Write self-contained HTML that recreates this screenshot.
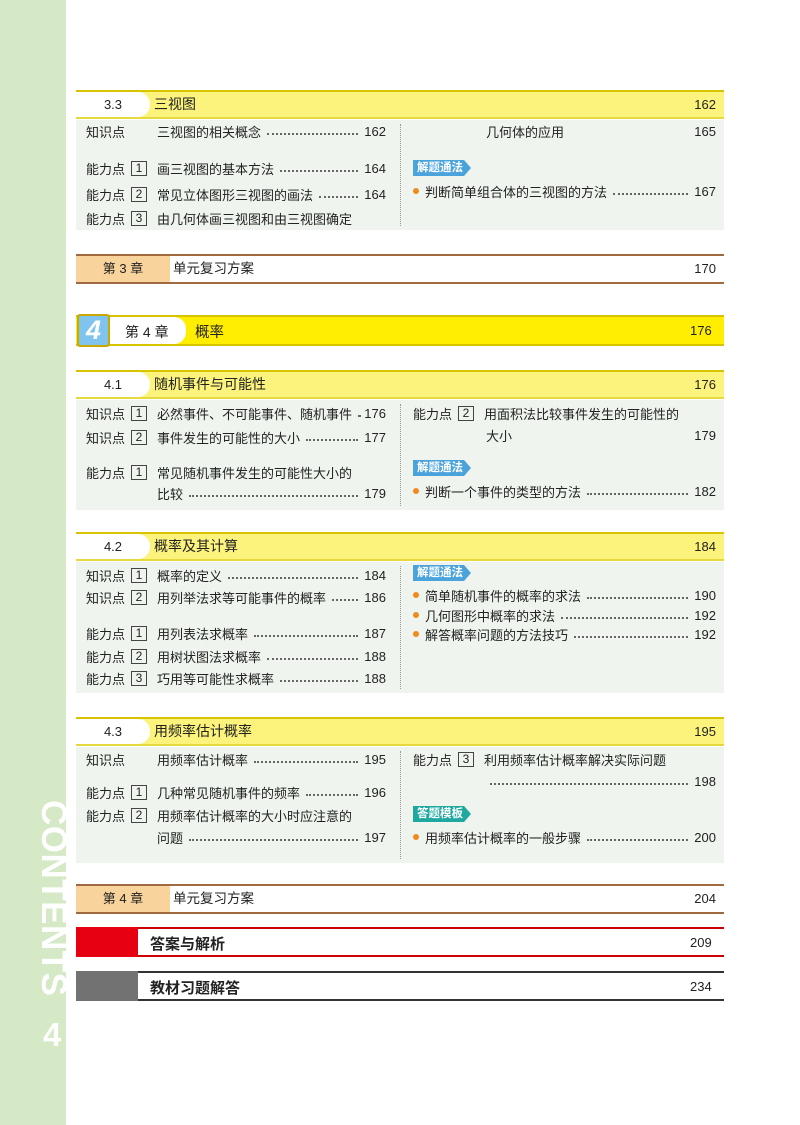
<!DOCTYPE html>
<html><head><meta charset="utf-8"><style>
*{margin:0;padding:0;box-sizing:border-box}
body{width:800px;height:1125px;background:#fff;position:relative;overflow:hidden;font-family:"Liberation Sans","Noto Sans CJK SC",sans-serif;font-size:13px;color:#222}
.a{position:absolute}
.strip{left:0;top:0;width:66px;height:1125px;background:#d6e9c6}
.four{left:43px;top:1016px;color:#fff;font-size:33px;font-weight:bold}
.sh{left:76px;width:648px;height:29px;border-top:2px solid #d8c300;border-bottom:2px solid #e8d840;background:#fbf37c}
.sh .n{position:absolute;left:0;top:0;width:74px;height:25px;background:#fff;text-align:center;line-height:25px;font-size:13px;border-radius:0 12px 12px 0}
.sh .t{position:absolute;left:78px;line-height:25px;font-size:14px}
.sh .p{position:absolute;right:8px;line-height:25px;font-size:13px}
.body{left:76px;width:648px;background:#eff5ee}
.div{left:400px;width:0;border-left:1.5px dotted #999}
.r{height:18px;display:flex;align-items:center;white-space:nowrap}
.lab{width:45px}
.bx{display:inline-block;width:16px;height:15px;border:1px solid #444;text-align:center;line-height:13px;font-size:12px;margin-right:10px}
.nb{display:inline-block;width:26px}
.ld{flex:1;border-bottom:2px dotted #666;height:1px;margin:6px 6px 0}
.bul{display:inline-block;width:6px;height:6px;border-radius:3px;background:#f08a1c;margin-right:6px}
.tag{height:16px;color:#fff;font-size:11.5px;font-weight:bold;line-height:16px;padding:0 8px 0 4px;clip-path:polygon(0 0,88% 0,100% 50%,88% 100%,0 100%)}
.cr{left:76px;width:648px;height:30px;border-top:2px solid #a06a40;border-bottom:2px solid #a06a40;background:#fff}
.cr .l{position:absolute;left:0;top:0;width:94px;height:26px;background:#f8d49c;text-align:center;line-height:26px}
.cr .t{position:absolute;left:97px;line-height:26px;font-size:13.5px}
.cr .p{position:absolute;right:8px;line-height:26px}
</style></head><body>
<div class="a strip"></div>
<div class="a" style="left:0;top:800px;width:66px;height:210px;"><div style="transform:rotate(90deg);transform-origin:0 0;position:absolute;left:68px;top:0;color:#fff;font-size:35px;font-weight:bold;white-space:nowrap;line-height:30px;letter-spacing:0.5px">CONTENTS</div></div>
<div class="a four">4</div>

<!-- 3.3 -->
<div class="a sh" style="top:90px"><div class="n">3.3</div><div class="t">三视图</div><div class="p">162</div></div>
<div class="a body" style="top:120px;height:110px"></div>
<div class="a div" style="top:124px;height:102px"></div>
<div class="a r" style="left:86px;width:300px;top:122px"><span class="lab">知识点</span><span class="nb"></span>三视图的相关概念<span class="ld"></span>162</div>
<div class="a r" style="left:86px;width:300px;top:159px"><span class="lab">能力点</span><span class="bx">1</span>画三视图的基本方法<span class="ld"></span>164</div>
<div class="a r" style="left:86px;width:300px;top:185px"><span class="lab">能力点</span><span class="bx">2</span>常见立体图形三视图的画法<span class="ld"></span>164</div>
<div class="a r" style="left:86px;width:300px;top:209px"><span class="lab">能力点</span><span class="bx">3</span>由几何体画三视图和由三视图确定</div>
<div class="a r" style="left:486px;width:230px;top:122px">几何体的应用<span style="flex:1"></span>165</div>
<div class="a tag" style="left:413px;top:160px;background:#4ba3dc">解题通法</div>
<div class="a r" style="left:413px;width:303px;top:182px"><span class="bul"></span>判断简单组合体的三视图的方法<span class="ld"></span>167</div>

<!-- ch3 review -->
<div class="a cr" style="top:254px"><div class="l">第 3 章</div><div class="t">单元复习方案</div><div class="p">170</div></div>

<!-- ch4 -->
<div class="a" style="left:76px;top:315px;width:648px;height:31px;border-top:2px solid #d8c300;border-bottom:2px solid #d8c300;background:#ffee00"></div>
<div class="a" style="left:110px;top:317px;width:76px;height:27px;background:#fff;border-radius:0 12px 12px 0"></div>
<div class="a" style="left:77px;top:314px;width:33px;height:33px;background:#7ec4ee;border:2px solid #c9a800;border-radius:3px;color:#fff;font-size:27px;font-weight:bold;font-style:italic;text-align:center;line-height:29px">4</div>
<div class="a" style="left:125px;top:322px;font-size:14px">第 4 章</div>
<div class="a" style="left:195px;top:321px;font-size:14.5px">概率</div>
<div class="a" style="left:690px;top:323px">176</div>

<!-- 4.1 -->
<div class="a sh" style="top:370px"><div class="n">4.1</div><div class="t">随机事件与可能性</div><div class="p">176</div></div>
<div class="a body" style="top:400px;height:110px"></div>
<div class="a div" style="top:404px;height:102px"></div>
<div class="a r" style="left:86px;width:300px;top:404px"><span class="lab">知识点</span><span class="bx">1</span>必然事件、不可能事件、随机事件<span class="ld"></span>176</div>
<div class="a r" style="left:86px;width:300px;top:428px"><span class="lab">知识点</span><span class="bx">2</span>事件发生的可能性的大小<span class="ld"></span>177</div>
<div class="a r" style="left:86px;width:300px;top:463px"><span class="lab">能力点</span><span class="bx">1</span>常见随机事件发生的可能性大小的</div>
<div class="a r" style="left:157px;width:229px;top:484px">比较<span class="ld"></span>179</div>
<div class="a r" style="left:413px;width:303px;top:404px"><span class="lab">能力点</span><span class="bx">2</span>用面积法比较事件发生的可能性的</div>
<div class="a r" style="left:486px;width:230px;top:426px">大小<span style="flex:1"></span>179</div>
<div class="a tag" style="left:413px;top:460px;background:#4ba3dc">解题通法</div>
<div class="a r" style="left:413px;width:303px;top:482px"><span class="bul"></span>判断一个事件的类型的方法<span class="ld"></span>182</div>

<!-- 4.2 -->
<div class="a sh" style="top:532px"><div class="n">4.2</div><div class="t">概率及其计算</div><div class="p">184</div></div>
<div class="a body" style="top:562px;height:131px"></div>
<div class="a div" style="top:566px;height:123px"></div>
<div class="a r" style="left:86px;width:300px;top:566px"><span class="lab">知识点</span><span class="bx">1</span>概率的定义<span class="ld"></span>184</div>
<div class="a r" style="left:86px;width:300px;top:588px"><span class="lab">知识点</span><span class="bx">2</span>用列举法求等可能事件的概率<span class="ld"></span>186</div>
<div class="a r" style="left:86px;width:300px;top:624px"><span class="lab">能力点</span><span class="bx">1</span>用列表法求概率<span class="ld"></span>187</div>
<div class="a r" style="left:86px;width:300px;top:647px"><span class="lab">能力点</span><span class="bx">2</span>用树状图法求概率<span class="ld"></span>188</div>
<div class="a r" style="left:86px;width:300px;top:669px"><span class="lab">能力点</span><span class="bx">3</span>巧用等可能性求概率<span class="ld"></span>188</div>
<div class="a tag" style="left:413px;top:565px;background:#4ba3dc">解题通法</div>
<div class="a r" style="left:413px;width:303px;top:586px"><span class="bul"></span>简单随机事件的概率的求法<span class="ld"></span>190</div>
<div class="a r" style="left:413px;width:303px;top:606px"><span class="bul"></span>几何图形中概率的求法<span class="ld"></span>192</div>
<div class="a r" style="left:413px;width:303px;top:625px"><span class="bul"></span>解答概率问题的方法技巧<span class="ld"></span>192</div>

<!-- 4.3 -->
<div class="a sh" style="top:717px"><div class="n">4.3</div><div class="t">用频率估计概率</div><div class="p">195</div></div>
<div class="a body" style="top:747px;height:116px"></div>
<div class="a div" style="top:751px;height:108px"></div>
<div class="a r" style="left:86px;width:300px;top:750px"><span class="lab">知识点</span><span class="nb"></span>用频率估计概率<span class="ld"></span>195</div>
<div class="a r" style="left:86px;width:300px;top:783px"><span class="lab">能力点</span><span class="bx">1</span>几种常见随机事件的频率<span class="ld"></span>196</div>
<div class="a r" style="left:86px;width:300px;top:806px"><span class="lab">能力点</span><span class="bx">2</span>用频率估计概率的大小时应注意的</div>
<div class="a r" style="left:157px;width:229px;top:828px">问题<span class="ld"></span>197</div>
<div class="a r" style="left:413px;width:303px;top:750px"><span class="lab">能力点</span><span class="bx">3</span>利用频率估计概率解决实际问题</div>
<div class="a r" style="left:486px;width:230px;top:772px"><span class="ld" style="margin-left:4px"></span>198</div>
<div class="a tag" style="left:413px;top:806px;background:#1fa8a0">答题模板</div>
<div class="a r" style="left:413px;width:303px;top:828px"><span class="bul"></span>用频率估计概率的一般步骤<span class="ld"></span>200</div>

<!-- ch4 review -->
<div class="a cr" style="top:884px"><div class="l">第 4 章</div><div class="t">单元复习方案</div><div class="p">204</div></div>

<div class="a" style="left:76px;top:927px;width:648px;height:30px;border-top:2px solid #c00;border-bottom:2px solid #c00"></div>
<div class="a" style="left:76px;top:927px;width:62px;height:30px;background:#e60012"></div>
<div class="a" style="left:150px;top:933px;font-size:15px;font-weight:bold">答案与解析</div>
<div class="a" style="left:690px;top:935px">209</div>

<div class="a" style="left:76px;top:971px;width:648px;height:30px;border-top:2px solid #333;border-bottom:2px solid #333"></div>
<div class="a" style="left:76px;top:971px;width:62px;height:30px;background:#727272"></div>
<div class="a" style="left:150px;top:977px;font-size:15px;font-weight:bold">教材习题解答</div>
<div class="a" style="left:690px;top:979px">234</div>
</body></html>
